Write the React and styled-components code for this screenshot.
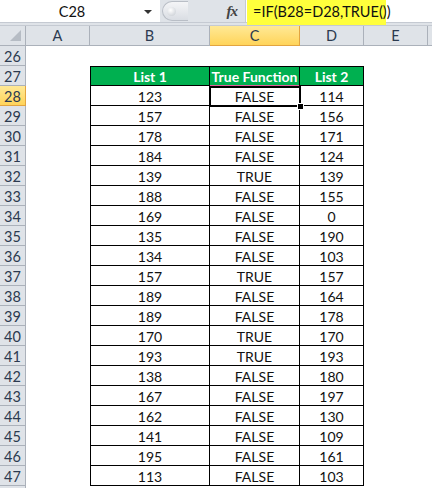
import styled, { createGlobalStyle, css } from "styled-components";

const GlobalStyle = createGlobalStyle`
  html, body {
    margin: 0;
    padding: 0;
    background: #ffffff;
    overflow: hidden;
  }
  body {
    font-family: Lato, "Open Sans", sans-serif;
  }
`;

const COLS = [
  { key: "A", width: 64 },
  { key: "B", width: 120 },
  { key: "C", width: 90 },
  { key: "D", width: 64 },
  { key: "E", width: 64 },
  { key: "F", width: 64 },
];

const B_VALUES = [123, 157, 178, 184, 139, 188, 169, 135, 134, 157, 189, 189, 170, 193, 138, 167, 162, 141, 195, 113];
const D_VALUES = [114, 156, 171, 124, 139, 155, 0, 190, 103, 157, 164, 178, 170, 193, 180, 197, 130, 109, 161, 103];

const Window = styled.div`
  width: 432px;
  height: 488px;
  overflow: hidden;
  background: #fff;
`;

const FormulaBar = styled.div`
  display: flex;
  height: 22px;
  border-bottom: 1px solid #c5cad2;
  background: #dfe3e8;
  position: relative;
`;

const NameBox = styled.div`
  width: 160px;
  flex-shrink: 0;
  background: #fff;
  display: flex;
  align-items: center;
  font-size: 14.5px;
  color: #111;
`;

const NameText = styled.span`
  width: 144px;
  text-align: center;
`;

const DropArrow = styled.span`
  width: 0;
  height: 0;
  border-left: 4px solid transparent;
  border-right: 4px solid transparent;
  border-top: 4px solid #333;
  margin-top: 1px;
`;

const ButtonStrip = styled.div`
  width: 85px;
  flex-shrink: 0;
  display: flex;
  align-items: center;
  justify-content: space-between;
  padding: 0 8px 0 2px;
  box-sizing: border-box;
`;

const Knob = styled.div`
  width: 26px;
  height: 20px;
  border-radius: 10px 0 0 10px;
  border: 1px solid #b9bec6;
  border-right: none;
  background: linear-gradient(#f4f5f7, #d9dde3);
  display: flex;
  align-items: center;
  padding-left: 4px;
  box-sizing: border-box;
`;

const KnobDot = styled.div`
  width: 9px;
  height: 9px;
  border-radius: 50%;
  background: radial-gradient(circle at 40% 35%, #ffffff, #c3c8cf);
`;

const Fx = styled.span`
  font-family: "Liberation Serif", serif;
  font-style: italic;
  font-weight: bold;
  font-size: 15px;
  color: #444;
  letter-spacing: -1px;
`;

const FormulaInput = styled.div`
  flex: 1;
  background: #fff;
  border-left: 1px solid #c5cad2;
  position: relative;
`;

const Highlight = styled.div`
  position: absolute;
  left: 1px;
  top: 0;
  width: 139px;
  height: 25px;
  background: #ffff3c;
  z-index: 2;
  display: flex;
  align-items: center;
  padding: 0 0 2px 6px;
  box-sizing: border-box;
  font-size: 14.5px;
  color: #111;
  white-space: nowrap;
`;

const Gap = styled.div`
  height: 2px;
  background: #dfe3e8;
  border-bottom: 1px solid #c5cad2;
`;

const Row = styled.div`
  display: flex;
  height: 20px;
`;

const headCell = css`
  box-sizing: border-box;
  height: 20px;
  display: flex;
  align-items: center;
  justify-content: center;
  font-size: 14.5px;
  color: #2c3a4f;
  border-right: 1px solid #abb1ba;
  border-bottom: 1px solid #abb1ba;
  background: ${(p) => (p.$active ? "linear-gradient(#ffe996, #ffd45a)" : "#dfe3e8")};
  ${(p) => p.$active && "border-color: #e2a440;"}
`;

const Corner = styled.div`
  ${headCell};
  width: 26px;
  flex-shrink: 0;
  position: relative;
  &::after {
    content: "";
    position: absolute;
    right: 4px;
    bottom: 4px;
    border-left: 11px solid transparent;
    border-bottom: 11px solid #b6bcc4;
  }
`;

const ColHead = styled.div`
  ${headCell};
  width: ${(p) => p.$w}px;
  flex-shrink: 0;
`;

const RowHead = styled.div`
  ${headCell};
  width: 26px;
  flex-shrink: 0;
  padding-top: 1px;
`;

const Cell = styled.div`
  box-sizing: border-box;
  width: ${(p) => p.$w}px;
  flex-shrink: 0;
  height: 20px;
  display: flex;
  align-items: center;
  justify-content: center;
  padding-top: 1px;
  font-size: 14px;
  color: #111;
  white-space: nowrap;
  position: relative;
  ${(p) =>
    p.$table &&
    css`
      border-right: 1px solid #000;
      border-bottom: 1px solid #000;
    `}
  ${(p) => p.$first && "border-left: 1px solid #000;"}
  ${(p) => p.$top && "border-top: 1px solid #000;"}
  ${(p) =>
    p.$head &&
    css`
      background: #00b050;
      color: #fff;
      font-weight: bold;
    `}
  ${(p) =>
    p.$selected &&
    css`
      &::before {
        content: "";
        position: absolute;
        left: 0;
        right: 0;
        top: -1px;
        height: 1px;
        background: #e0609a;
        z-index: 3;
      }
      &::after {
        content: "";
        position: absolute;
        left: -1px;
        right: -2px;
        top: 0;
        bottom: -2px;
        border: 2px solid #000;
        box-shadow: inset 0 0 0 1px #fff;
        z-index: 3;
      }
    `}
`;

const FillHandle = styled.span`
  position: absolute;
  right: -5px;
  bottom: -5px;
  width: 5px;
  height: 5px;
  background: #000;
  border: 1px solid #fff;
  z-index: 4;
`;

function TableRow({ num, values, head, active }) {
  return (
    <Row>
      <RowHead $active={active}>{num}</RowHead>
      <Cell $w={64} />
      <Cell $w={120} $table $first $top={head} $head={head}>
        {values[0]}
      </Cell>
      <Cell $w={90} $table $top={head} $head={head} $selected={active}>
        {values[1]}
        {active && <FillHandle />}
      </Cell>
      <Cell $w={64} $table $top={head} $head={head}>
        {values[2]}
      </Cell>
      <Cell $w={64} />
      <Cell $w={64} />
    </Row>
  );
}

export default function App() {
  const rows = B_VALUES.map((b, i) => {
    const d = D_VALUES[i];
    return [b, b === d ? "TRUE" : "FALSE", d];
  });

  return (
    <Window>
      <GlobalStyle />
      <FormulaBar>
        <NameBox>
          <NameText>C28</NameText>
          <DropArrow />
        </NameBox>
        <ButtonStrip>
          <Knob>
            <KnobDot />
          </Knob>
          <Fx>fx</Fx>
        </ButtonStrip>
        <FormulaInput>
          <Highlight>=IF(B28=D28,TRUE())</Highlight>
        </FormulaInput>
      </FormulaBar>
      <Gap />
      <Row>
        <Corner />
        {COLS.map((c) => (
          <ColHead key={c.key} $w={c.width} $active={c.key === "C"}>
            {c.key === "F" ? "" : c.key}
          </ColHead>
        ))}
      </Row>
      <Row>
        <RowHead>26</RowHead>
      </Row>
      <TableRow num={27} head values={["List 1", "True Function", "List 2"]} />
      {rows.map((r, i) => (
        <TableRow key={i} num={28 + i} values={r} active={i === 0} />
      ))}
      <Row>
        <RowHead />
      </Row>
    </Window>
  );
}
